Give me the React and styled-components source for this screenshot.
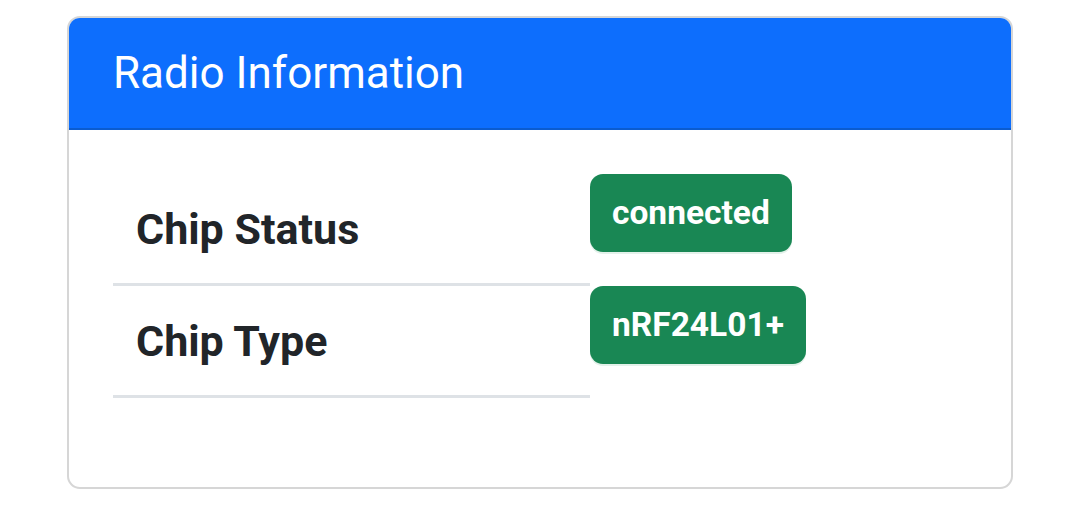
import React from 'react';
import styled, { createGlobalStyle } from 'styled-components';

/* page reset */
const GlobalStyle = createGlobalStyle`
  html, body {
    margin: 0;
    padding: 0;
    background: #ffffff;
  }
  body {
    font-family: Roboto, "Liberation Sans", Arial, sans-serif;
    color: #212529;
  }
`;

const Page = styled.div`
  padding: 16px 0 0 67px;
`;

const Card = styled.div`
  box-sizing: border-box;
  width: 946px;
  height: 473px;
  border: 2px solid #d6d6d6;
  border-radius: 13px;
  overflow: hidden;
  display: flex;
  flex-direction: column;
`;

const CardHeader = styled.div`
  box-sizing: border-box;
  height: 112px;
  display: flex;
  align-items: center;
  padding-left: 44px;
  background: #0d6efd;
  border-bottom: 2px solid #0b5ccf;
  color: #ffffff;
  font-size: 44px;
  font-weight: 400;
`;

const CardBody = styled.div`
  padding: 44px 44px 44px 44px;
`;

const Table = styled.div`
  display: flex;
  flex-direction: column;
`;

const Row = styled.div`
  display: grid;
  grid-template-columns: 477px auto;
  align-items: start;
`;

const Label = styled.div`
  box-sizing: border-box;
  height: 112px;
  display: flex;
  align-items: center;
  padding-left: 23px;
  border-bottom: 3px solid #dee2e6;
  font-size: 43px;
  font-weight: 700;
  color: #212529;
`;

const Value = styled.div`
  display: flex;
  align-items: flex-start;
`;

const Badge = styled.span`
  display: inline-block;
  padding: 22px 22px;
  line-height: 1;
  font-size: 33.5px;
  font-weight: 700;
  color: #ffffff;
  background: ${(p) => p.$bg || '#198754'};
  border-radius: 13px;
  box-shadow: 0 2px 0 #e3f1ea;
`;

const rows = [
  { label: 'Chip Status', value: 'connected' },
  { label: 'Chip Type', value: 'nRF24L01+' },
];

const App = () => (
  <>
    <GlobalStyle />
    <Page>
      <Card>
        <CardHeader>Radio Information</CardHeader>
        <CardBody>
          <Table>
            {rows.map((r) => (
              <Row key={r.label}>
                <Label>{r.label}</Label>
                <Value>
                  <Badge>{r.value}</Badge>
                </Value>
              </Row>
            ))}
          </Table>
        </CardBody>
      </Card>
    </Page>
  </>
);

export default App;
